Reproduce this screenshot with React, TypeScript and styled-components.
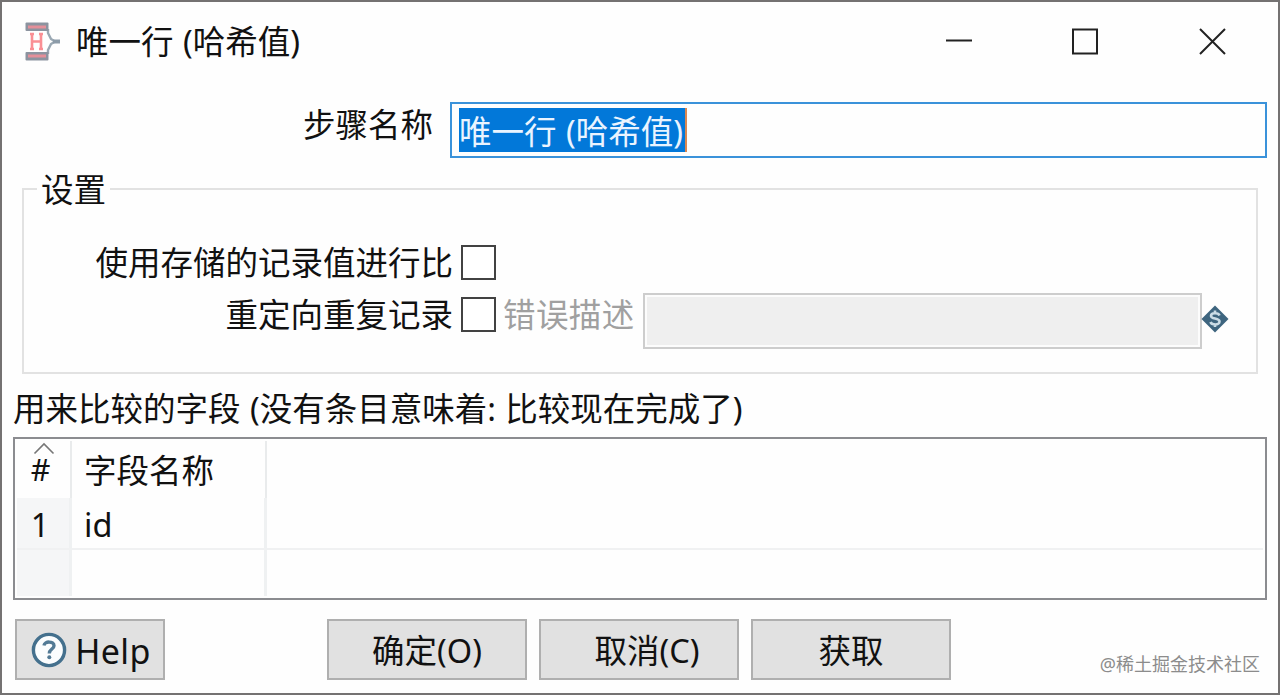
import React from "react";
import styled, { createGlobalStyle } from "styled-components";

const GlobalStyle = createGlobalStyle`
  * { box-sizing: border-box; }
  body {
    margin: 0;
    background: #fff;
    font-family: "Noto Sans", "Noto Sans CJK SC", sans-serif;
    font-size: 32.5px;
    line-height: 44px;
    word-spacing: 1px;
    color: #111;
  }
`;

const Window = styled.div`
  width: 1280px;
  height: 695px;
  display: flex;
  flex-direction: column;
  background: #fefefe;
  border: 2px solid #747272;
  overflow: hidden;
  white-space: nowrap;
`;

const TitleBar = styled.header`
  height: 79px;
  flex: none;
  display: flex;
  align-items: center;
  padding: 0 51px 0 21px;
`;

const Title = styled.h1`
  margin: 0 auto 0 13px;
  padding-top: 1px;
  font: inherit;
`;

const WindowControls = styled.div`
  display: flex;
  gap: 98px;
`;

const NameRow = styled.div`
  height: 56px;
  margin: 21px 11px 0 0;
  flex: none;
  display: flex;
  align-items: flex-start;
`;

const NameLabel = styled.label`
  width: 431px;
  margin-right: 17px;
  padding-top: 1px;
  text-align: right;
`;

const NameInput = styled.div`
  flex: 1;
  height: 56px;
  border: 2px solid #3a92da;
  padding: 4px 6px 5px 7px;
`;

const Selection = styled.span`
  display: block;
  width: 228px;
  height: 44px;
  line-height: 47px;
  color: #eaf4ff;
  background: #0278d9;
  border-right: 2px solid #d98752;
`;

const Settings = styled.fieldset`
  height: 207px;
  flex: none;
  margin: 9px 20px 0 20px;
  min-width: 0;
  padding: 25px 0 0;
  border: 2px solid #e2e2e2;
`;

const Legend = styled.legend`
  margin-left: 13px;
  padding: 1px 4px 0;
  height: 44px;
`;

const OptionRow = styled.div`
  height: 52px;
  display: flex;
  align-items: center;
`;

const OptionLabel = styled.label`
  width: 429px;
  padding-top: 2px;
  text-align: right;
`;

const CheckBox = styled.span`
  width: 35px;
  height: 35px;
  margin-left: 8px;
  border: 2px solid #424242;
  background: #fff;
`;

const DisabledLabel = styled.span`
  width: 140px;
  margin-left: 7px;
  padding-top: 2px;
  letter-spacing: 0.4px;
  color: #a0a0a0;
`;

const DisabledInput = styled.span`
  width: 559px;
  height: 56px;
  margin-top: 13px;
  border: 2px solid #cdcdcd;
  background: #efefef;
  box-shadow: inset 0 0 0 2px #fcfcfc;
`;

const VariableSlot = styled.span`
  display: flex;
  margin: 9px 0 0 -1px;
`;

const TableCaption = styled.div`
  height: 44px;
  margin: 12px 0 0 11px;
  padding-top: 1px;
  flex: none;
`;

const Table = styled.div`
  height: 163px;
  margin: 7px 11px 0 11px;
  flex: none;
  border: 2px solid #8b8c90;
  padding: 2px;
  display: grid;
  grid-template-columns: 55px 195px 1fr;
  grid-template-rows: 57px 52px 46px;
`;

const Cell = styled.div<{ $index?: boolean; $head?: boolean; $last?: boolean }>`
  display: flex;
  flex-direction: column;
  align-items: ${(p) => (p.$index ? "center" : "flex-start")};
  justify-content: center;
  padding: ${(p) => (p.$index ? "0 6px 0 0" : "0 0 0 12px")};
  padding-top: ${(p) => (p.$head ? "3px" : "4px")};
  border-right: ${(p) => (p.$last ? "0" : p.$head ? "2px solid #e9ebec" : "3px solid #eff1f2")};
  border-bottom: ${(p) => (p.$head ? "0" : "2px solid #f0f1f2")};
  background: ${(p) => (p.$index && !p.$head ? "#f5f6f7" : "transparent")};
  &:nth-last-child(-n + 3) { border-bottom: 0; }
`;

const SortMark = styled.svg`
  margin: -9px 0 -8px 6px;
  flex: none;
`;

const IndexHeading = styled.span`
  font-size: 30.5px;
`;

const Footer = styled.footer`
  display: flex;
  align-items: flex-start;
  margin: 19px 18px 0 13px;
`;

const Button = styled.button<{ $width: number; $gap?: number; $shift?: number }>`
  width: ${(p) => p.$width}px;
  height: 61px;
  flex: none;
  margin: 0 0 0 ${(p) => p.$gap ?? 0}px;
  padding: 2px 0 0 ${(p) => p.$shift ?? 0}px;
  display: flex;
  align-items: center;
  justify-content: center;
  border: 2px solid #afafaf;
  background: #e1e1e1;
  font: inherit;
  color: inherit;
`;

const HelpText = styled.span`
  margin-left: 8px;
  font-size: 34px;
  letter-spacing: 0.4px;
`;

const HelpGlyph = styled.svg`
  flex: none;
  margin-bottom: 2px;
`;

const Watermark = styled.span`
  margin: 33px 0 0 auto;
  font-size: 18px;
  line-height: 24px;
  color: #8c8c8c;
`;

const StepIcon = () => (
  <svg width="40" height="42" viewBox="0 0 40 42" fill="none">
    <path d="M25 8V12L28 18L32 20.500M25 33V29L28 23L32 20.500" stroke="#9aa8b3" strokeWidth="2.400" />
    <path d="M30 20.500H37" stroke="#8c9ba8" strokeWidth="4" />
    <rect x="2.500" y="1.500" width="23" height="8.500" rx="1" fill="#8c939f" />
    <rect x="2.500" y="31" width="23" height="8.500" rx="1" fill="#8c939f" />
    <path d="M5 6H23M5 35H23" stroke="#e48f99" strokeWidth="3" />
    <path d="M9 12.500V28.500M18 12.500V28.500M9 20.500H18M7 13H11M16 13H20M7 28H11M16 28H20" stroke="#fa8f94" strokeWidth="2.600" />
  </svg>
);

const VariableIcon = () => (
  <svg width="28" height="28" viewBox="0 0 28 28" fill="none">
    <path d="M14 .5 27.500 14 14 27.500 .5 14Z" fill="#3e657f" />
    <path d="M18.500 10.500C17.500 7.600 10 7.300 10 11C10 14.500 18.500 12.500 18.500 16.500C18.500 20.700 10.500 20 9.500 17M14 5.500V8M14 19.500V22" stroke="#cbdce6" strokeWidth="2.600" />
  </svg>
);

const HelpIcon = () => (
  <HelpGlyph width="36" height="36" viewBox="0 0 36 36" fill="none">
    <circle cx="18" cy="18" r="15.600" fill="#fbfdfe" stroke="#44708d" strokeWidth="3.400" />
    <path d="M13 13.500C13.500 8.800 23 9 23 13.700C23 17 18.300 17.300 18.300 21.500" stroke="#527a95" strokeWidth="3.400" />
    <circle cx="18.300" cy="25.300" r="2" fill="#527a95" />
  </HelpGlyph>
);

export default function App() {
  return (
    <>
      <GlobalStyle />
      <Window>
        <TitleBar>
          <StepIcon />
          <Title>唯一行 (哈希值)</Title>
          <WindowControls>
            <svg width="28" height="28"><path d="M1 12.500H27" stroke="#222" strokeWidth="2" /></svg>
            <svg width="28" height="28"><rect x="2" y="1.500" width="24" height="24" fill="none" stroke="#222" strokeWidth="2" /></svg>
            <svg width="30" height="28"><path d="M3 1 28 26M28 1 3 26" stroke="#222" strokeWidth="2" /></svg>
          </WindowControls>
        </TitleBar>
        <NameRow>
          <NameLabel>步骤名称</NameLabel>
          <NameInput><Selection>唯一行 (哈希值)</Selection></NameInput>
        </NameRow>
        <Settings>
          <Legend>设置</Legend>
          <OptionRow>
            <OptionLabel>使用存储的记录值进行比</OptionLabel>
            <CheckBox />
          </OptionRow>
          <OptionRow>
            <OptionLabel>重定向重复记录</OptionLabel>
            <CheckBox />
            <DisabledLabel>错误描述</DisabledLabel>
            <DisabledInput />
            <VariableSlot><VariableIcon /></VariableSlot>
          </OptionRow>
        </Settings>
        <TableCaption>用来比较的字段 (没有条目意味着: 比较现在完成了)</TableCaption>
        <Table>
          <Cell $index $head>
            <SortMark width="22" height="13" viewBox="0 0 22 13">
              <path d="M1.500 11.500 11 2 20.500 11.500" fill="none" stroke="#777" strokeWidth="1.600" />
            </SortMark>
            <IndexHeading>#</IndexHeading>
          </Cell>
          <Cell $head>字段名称</Cell>
          <Cell $head $last />
          <Cell $index>1</Cell>
          <Cell>id</Cell>
          <Cell $last />
          <Cell $index />
          <Cell />
          <Cell $last />
        </Table>
        <Footer>
          <Button $width={150} $shift={2}><HelpIcon /><HelpText>Help</HelpText></Button>
          <Button $width={200} $gap={162}>确定(O)</Button>
          <Button $width={200} $gap={12} $shift={16}>取消(C)</Button>
          <Button $width={200} $gap={12}>获取</Button>
          <Watermark>@稀土掘金技术社区</Watermark>
        </Footer>
      </Window>
    </>
  );
}
